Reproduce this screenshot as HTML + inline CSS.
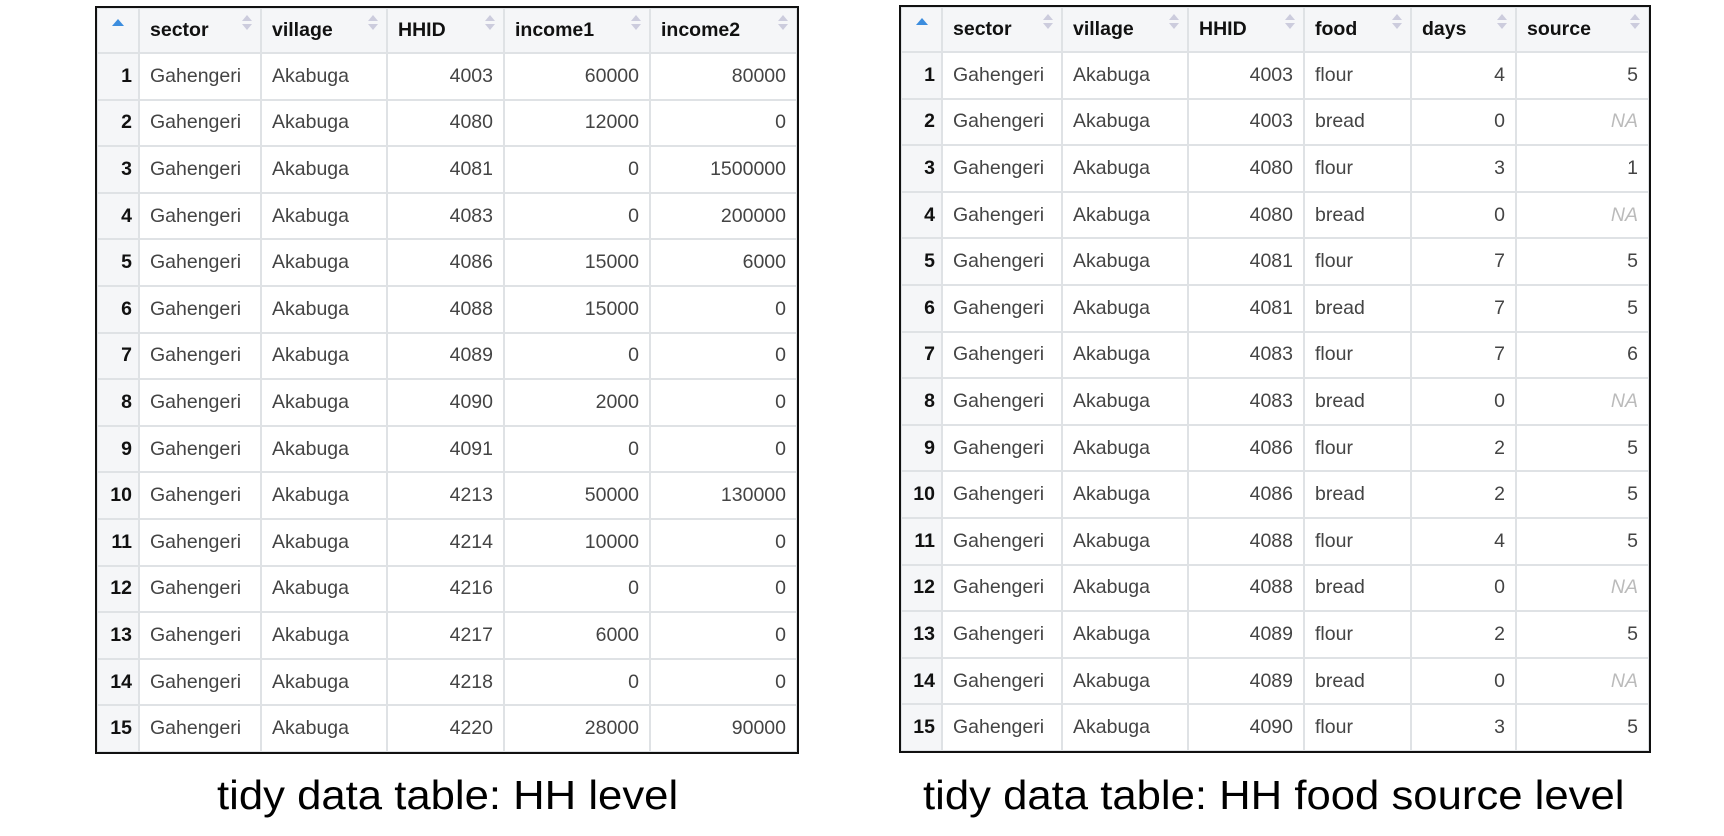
<!DOCTYPE html>
<html><head><meta charset="utf-8"><style>
body{margin:0;width:1724px;height:836px;background:#fff;position:relative;overflow:hidden;font-family:"Liberation Sans",sans-serif}
table{position:absolute;border-collapse:collapse;table-layout:fixed;outline:2px solid #111;outline-offset:-1px}
td,th{border:2px solid #dfe2e5;padding:0 10px;font-size:19.5px;white-space:nowrap;overflow:hidden;color:#444}
th{height:43px;background:#f5f6f8;color:#111;text-align:left;position:relative;font-weight:bold}
td{height:44.6px;background:#fff}
td.n{background:#f5f6f8;color:#111;font-weight:bold;text-align:right;padding:0 6px}
td.r{text-align:right}
td.na{text-align:right;color:#bbb;font-style:italic}
th .s{position:absolute;right:8px;top:6px;width:0;height:0;border-left:5px solid transparent;border-right:5px solid transparent;border-bottom:6px solid #ccd}
th .s:after{content:"";position:absolute;left:-5px;top:9px;border-left:5px solid transparent;border-right:5px solid transparent;border-top:6px solid #ccd}
th .b{position:absolute;left:50%;margin-left:-6px;top:10px;border-left:6px solid transparent;border-right:6px solid transparent;border-bottom:7px solid #3c8dde}
.cap{position:absolute;top:772px;font-size:41px;color:#000;white-space:nowrap;transform:scaleX(1.065);transform-origin:left}
</style></head><body>
<table style="left:96px;top:7px;width:700px">
<colgroup><col style="width:42px"><col style="width:122px"><col style="width:126px"><col style="width:117px"><col style="width:146px"><col style="width:147px"></colgroup>
<tr><th><span class="b"></span></th><th>sector<span class="s"></span></th><th>village<span class="s"></span></th><th>HHID<span class="s"></span></th><th>income1<span class="s"></span></th><th>income2<span class="s"></span></th></tr>
<tr><td class="n">1</td><td>Gahengeri</td><td>Akabuga</td><td class="r">4003</td><td class="r">60000</td><td class="r">80000</td></tr>
<tr><td class="n">2</td><td>Gahengeri</td><td>Akabuga</td><td class="r">4080</td><td class="r">12000</td><td class="r">0</td></tr>
<tr><td class="n">3</td><td>Gahengeri</td><td>Akabuga</td><td class="r">4081</td><td class="r">0</td><td class="r">1500000</td></tr>
<tr><td class="n">4</td><td>Gahengeri</td><td>Akabuga</td><td class="r">4083</td><td class="r">0</td><td class="r">200000</td></tr>
<tr><td class="n">5</td><td>Gahengeri</td><td>Akabuga</td><td class="r">4086</td><td class="r">15000</td><td class="r">6000</td></tr>
<tr><td class="n">6</td><td>Gahengeri</td><td>Akabuga</td><td class="r">4088</td><td class="r">15000</td><td class="r">0</td></tr>
<tr><td class="n">7</td><td>Gahengeri</td><td>Akabuga</td><td class="r">4089</td><td class="r">0</td><td class="r">0</td></tr>
<tr><td class="n">8</td><td>Gahengeri</td><td>Akabuga</td><td class="r">4090</td><td class="r">2000</td><td class="r">0</td></tr>
<tr><td class="n">9</td><td>Gahengeri</td><td>Akabuga</td><td class="r">4091</td><td class="r">0</td><td class="r">0</td></tr>
<tr><td class="n">10</td><td>Gahengeri</td><td>Akabuga</td><td class="r">4213</td><td class="r">50000</td><td class="r">130000</td></tr>
<tr><td class="n">11</td><td>Gahengeri</td><td>Akabuga</td><td class="r">4214</td><td class="r">10000</td><td class="r">0</td></tr>
<tr><td class="n">12</td><td>Gahengeri</td><td>Akabuga</td><td class="r">4216</td><td class="r">0</td><td class="r">0</td></tr>
<tr><td class="n">13</td><td>Gahengeri</td><td>Akabuga</td><td class="r">4217</td><td class="r">6000</td><td class="r">0</td></tr>
<tr><td class="n">14</td><td>Gahengeri</td><td>Akabuga</td><td class="r">4218</td><td class="r">0</td><td class="r">0</td></tr>
<tr><td class="n">15</td><td>Gahengeri</td><td>Akabuga</td><td class="r">4220</td><td class="r">28000</td><td class="r">90000</td></tr>
</table>
<table style="left:900px;top:6px;width:748px">
<colgroup><col style="width:41px"><col style="width:120px"><col style="width:126px"><col style="width:116px"><col style="width:107px"><col style="width:105px"><col style="width:133px"></colgroup>
<tr><th><span class="b"></span></th><th>sector<span class="s"></span></th><th>village<span class="s"></span></th><th>HHID<span class="s"></span></th><th>food<span class="s"></span></th><th>days<span class="s"></span></th><th>source<span class="s"></span></th></tr>
<tr><td class="n">1</td><td>Gahengeri</td><td>Akabuga</td><td class="r">4003</td><td>flour</td><td class="r">4</td><td class="r">5</td></tr>
<tr><td class="n">2</td><td>Gahengeri</td><td>Akabuga</td><td class="r">4003</td><td>bread</td><td class="r">0</td><td class="na">NA</td></tr>
<tr><td class="n">3</td><td>Gahengeri</td><td>Akabuga</td><td class="r">4080</td><td>flour</td><td class="r">3</td><td class="r">1</td></tr>
<tr><td class="n">4</td><td>Gahengeri</td><td>Akabuga</td><td class="r">4080</td><td>bread</td><td class="r">0</td><td class="na">NA</td></tr>
<tr><td class="n">5</td><td>Gahengeri</td><td>Akabuga</td><td class="r">4081</td><td>flour</td><td class="r">7</td><td class="r">5</td></tr>
<tr><td class="n">6</td><td>Gahengeri</td><td>Akabuga</td><td class="r">4081</td><td>bread</td><td class="r">7</td><td class="r">5</td></tr>
<tr><td class="n">7</td><td>Gahengeri</td><td>Akabuga</td><td class="r">4083</td><td>flour</td><td class="r">7</td><td class="r">6</td></tr>
<tr><td class="n">8</td><td>Gahengeri</td><td>Akabuga</td><td class="r">4083</td><td>bread</td><td class="r">0</td><td class="na">NA</td></tr>
<tr><td class="n">9</td><td>Gahengeri</td><td>Akabuga</td><td class="r">4086</td><td>flour</td><td class="r">2</td><td class="r">5</td></tr>
<tr><td class="n">10</td><td>Gahengeri</td><td>Akabuga</td><td class="r">4086</td><td>bread</td><td class="r">2</td><td class="r">5</td></tr>
<tr><td class="n">11</td><td>Gahengeri</td><td>Akabuga</td><td class="r">4088</td><td>flour</td><td class="r">4</td><td class="r">5</td></tr>
<tr><td class="n">12</td><td>Gahengeri</td><td>Akabuga</td><td class="r">4088</td><td>bread</td><td class="r">0</td><td class="na">NA</td></tr>
<tr><td class="n">13</td><td>Gahengeri</td><td>Akabuga</td><td class="r">4089</td><td>flour</td><td class="r">2</td><td class="r">5</td></tr>
<tr><td class="n">14</td><td>Gahengeri</td><td>Akabuga</td><td class="r">4089</td><td>bread</td><td class="r">0</td><td class="na">NA</td></tr>
<tr><td class="n">15</td><td>Gahengeri</td><td>Akabuga</td><td class="r">4090</td><td>flour</td><td class="r">3</td><td class="r">5</td></tr>
</table>
<div class="cap" style="left:217px">tidy data table: HH level</div>
<div class="cap" style="left:923px">tidy data table: HH food source level</div>
</body></html>
